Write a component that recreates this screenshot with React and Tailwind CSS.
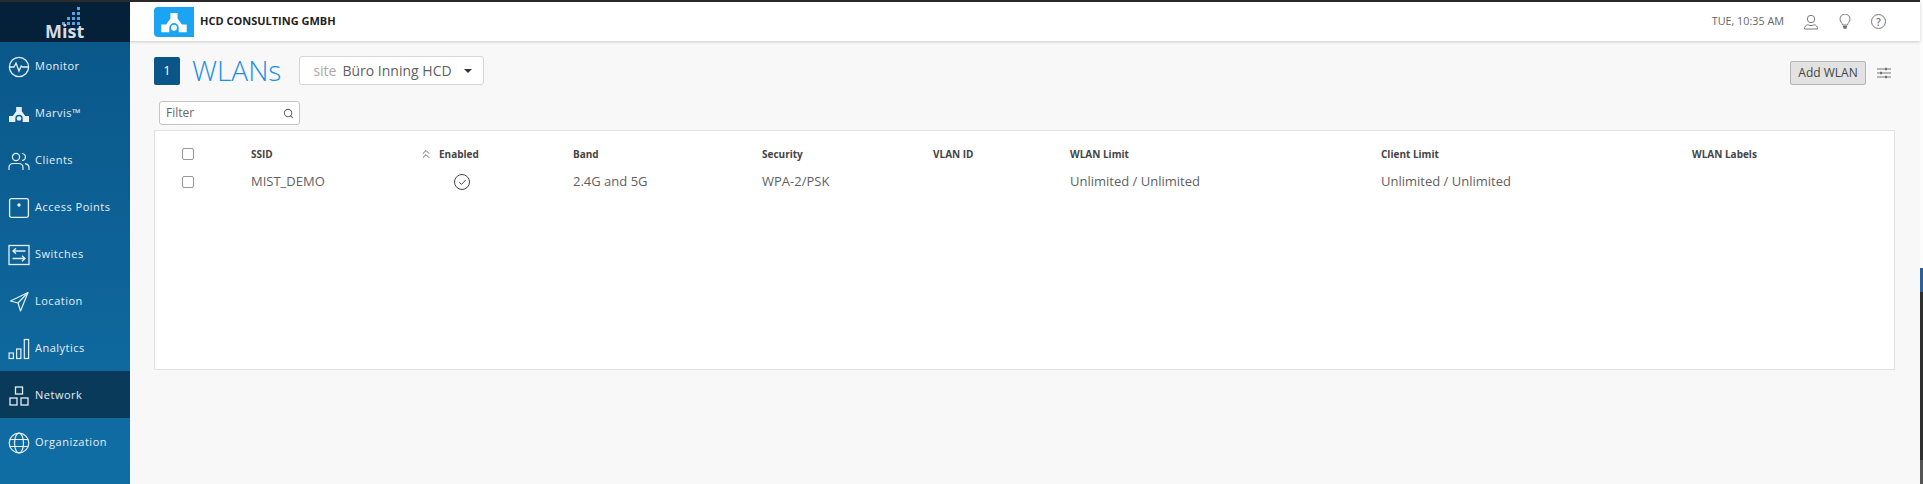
import { ChevronsUp, Search, Check } from "lucide-react";

const IconMonitor = () => (
  <svg width="22" height="22" viewBox="0 0 22 22" fill="none" stroke="currentColor" strokeWidth="1.3">
    <circle cx="11" cy="11" r="9.6" />
    <path d="M1.5 11h4.500l2-4 3 8 2.200-5 1.300 1h6" />
  </svg>
);

const IconMarvis = ({ size = 22, className = "" }) => (
  <svg className={className} width={size} height={size} viewBox="0 0 22 22" fill="currentColor">
    <path d="M8.200 4h5.600v4.200L17.200 13H21v6h-6.300v-3.500a3.700 3.700 0 0 0-7.400 0V19H1v-6h3.800l3.400-4.800z" />
    <circle cx="11" cy="15.500" r="2.300" />
  </svg>
);

const IconClients = () => (
  <svg width="22" height="22" viewBox="0 0 22 22" fill="none" stroke="currentColor" strokeWidth="1.200">
    <circle cx="8" cy="7" r="3.600" />
    <path d="M1 20v-2.500c0-2.600 2-4 4.500-4h5c2.500 0 4.500 1.400 4.500 4V20" />
    <path d="M14 3.500c2.300.3 3.400 1.800 3.400 3.500s-1.100 3.200-3.400 3.500M17 13.600c2.500.4 4 1.800 4 4V20" />
  </svg>
);

const IconAccessPoint = () => (
  <svg width="22" height="22" viewBox="0 0 22 22" fill="none" stroke="currentColor" strokeWidth="1.300">
    <rect x="1.600" y="1.600" width="18.800" height="18.800" rx="1.800" />
    <circle cx="11" cy="8" r="1.700" fill="currentColor" stroke="none" />
  </svg>
);

const IconSwitches = () => (
  <svg width="22" height="22" viewBox="0 0 22 22" fill="none" stroke="currentColor" strokeWidth="1.300">
    <rect x="1" y="1.500" width="20" height="19" />
    <path d="M17.500 7H5M8 4.300 5 7l3 2.700M4.500 14.500H17M14 11.800l3 2.700-3 2.700" />
  </svg>
);

const IconLocation = () => (
  <svg width="22" height="22" viewBox="0 0 22 22" fill="none" stroke="currentColor" strokeWidth="1.200" strokeLinejoin="round">
    <path d="M20 1.500 2.500 10l7.500 2 2.500 8z" />
    <path d="M20 1.500 10 12" />
  </svg>
);

const IconAnalytics = () => (
  <svg width="22" height="22" viewBox="0 0 22 22" fill="none" stroke="currentColor" strokeWidth="1.200">
    <rect x="1.100" y="15" width="4.300" height="5.500" />
    <rect x="8.600" y="11" width="4.300" height="9.500" />
    <rect x="16.300" y="1.500" width="4.300" height="19" />
  </svg>
);

const IconNetwork = () => (
  <svg width="22" height="22" viewBox="0 0 22 22" fill="none" stroke="currentColor" strokeWidth="1.300">
    <rect x="7.500" y="2" width="7" height="7" />
    <rect x="2" y="13" width="7" height="7" />
    <rect x="13" y="13" width="7" height="7" />
  </svg>
);

const IconGlobe = () => (
  <svg width="22" height="22" viewBox="0 0 22 22" fill="none" stroke="currentColor" strokeWidth="1.200">
    <circle cx="11" cy="11" r="9.800" />
    <ellipse cx="11" cy="11" rx="4.500" ry="9.800" />
    <path d="M1.800 7.500h18.400M1.800 14.500h18.400" />
  </svg>
);

const NAV_ITEMS = [
  { label: "Monitor", icon: IconMonitor },
  { label: "Marvis™", icon: IconMarvis },
  { label: "Clients", icon: IconClients },
  { label: "Access Points", icon: IconAccessPoint },
  { label: "Switches", icon: IconSwitches },
  { label: "Location", icon: IconLocation },
  { label: "Analytics", icon: IconAnalytics },
  { label: "Network", icon: IconNetwork, active: true },
  { label: "Organization", icon: IconGlobe },
];

const Checkbox = () => (
  <span className="block h-[12px] w-[12px] rounded-[2px] border border-[#9a9a9a] bg-white" />
);

const MistLogo = () => (
  <div className="relative h-[40px] bg-[#052039]">
    <svg className="absolute left-[62px] top-[4px]" width="20" height="20" viewBox="0 0 20 20" fill="#4ea6e8">
      <rect x="15" y="1" width="3" height="3" />
      <rect x="15" y="6" width="3" height="3" />
      <rect x="10" y="6" width="3" height="3" />
      <rect x="15" y="11" width="3" height="3" />
      <rect x="10" y="11" width="3" height="3" />
      <rect x="5" y="11" width="3" height="3" />
      <rect x="15" y="16" width="3" height="3" />
      <rect x="10" y="16" width="3" height="3" />
      <rect x="5" y="16" width="3" height="3" />
      <rect x="0" y="16" width="3" height="3" />
    </svg>
    <span className="absolute bottom-[0px] left-[45px] text-[18px] leading-[22px] font-bold text-[#d5dde4]">
      Mist
    </span>
  </div>
);

const Sidebar = () => (
  <aside className="flex w-[130px] shrink-0 flex-col bg-gradient-to-b from-[#0a5688] to-[#106ea5]">
    <MistLogo />
    <nav className="flex flex-col">
      {NAV_ITEMS.map(({ label, icon: Icon, active }) => (
        <div
          key={label}
          className={`flex h-[47px] items-center gap-[5px] pl-[8px] pt-[2px] text-[11px] tracking-[0.5px] text-[#e6eff5] ${active ? "bg-[#0a3a5a]" : ""}`}
        >
          <Icon />
          <span>{label}</span>
        </div>
      ))}
    </nav>
  </aside>
);

const Header = () => (
  <header className="flex h-[39px] shrink-0 items-center justify-between bg-white pl-[24px] pr-[34px] shadow-[0_1px_3px_rgba(0,0,0,0.18)]">
    <div className="flex items-center gap-[6px]">
      <span className="flex h-[30px] w-[40px] items-center justify-center rounded-l-[4px] bg-[#1ca4f4] text-white">
        <IconMarvis size={28} />
      </span>
      <span className="text-[11px] font-bold text-[#222]">HCD CONSULTING GMBH</span>
    </div>
    <div className="flex items-center text-[#6d6d6d]">
      <span className="mr-[19px] text-[10.800px] text-[#666]">TUE, 10:35 AM</span>
      <svg className="mr-[19px]" width="16" height="16" viewBox="0 0 16 16" fill="none" stroke="currentColor" strokeWidth="0.900">
        <circle cx="8" cy="5" r="3.700" />
        <path d="M1.500 15c0-2.500 1.200-3.800 3.200-4.200 2 1 4.600 1 6.600 0 2 .4 3.200 1.700 3.200 4.200z" />
      </svg>
      <svg className="mr-[19px]" width="14" height="16" viewBox="0 0 14 16" fill="none" stroke="currentColor" strokeWidth="0.900">
        <path d="M4.500 11c0-2-2.500-3-2.500-6a5 5 0 0 1 10 0c0 3-2.500 4-2.500 6z" />
        <path d="M5 12.500h4M5.500 14h3" strokeWidth="1.300" />
      </svg>
      <span className="flex h-[15px] w-[15px] items-center justify-center rounded-full border border-[#777] text-[10px] font-semibold leading-none">
        ?
      </span>
    </div>
  </header>
);

const COLUMNS = "grid grid-cols-[96px_171px_151px_189px_171px_137px_311px_311px_1fr]";

const WlanTable = () => (
  <div className="ml-[24px] mr-[25px] mt-[5px] h-[240px] border border-[#e2e2e2] bg-white">
    <div className={`${COLUMNS} mt-[13px] h-[20px] items-center text-[10px] font-bold text-[#444]`}>
      <div className="pl-[27px]"><Checkbox /></div>
      <div>SSID</div>
      <div className="flex items-center">
        <ChevronsUp size={14} strokeWidth={1.500} className="ml-[-3px] mr-[6px] text-[#555]" />
        <span>Enabled</span>
      </div>
      <div>Band</div>
      <div>Security</div>
      <div>VLAN ID</div>
      <div>WLAN Limit</div>
      <div>Client Limit</div>
      <div>WLAN Labels</div>
    </div>
    <div className={`${COLUMNS} mt-[6px] h-[24px] items-center text-[13px] text-[#5f5f5f]`}>
      <div className="pl-[27px]"><Checkbox /></div>
      <div>MIST_DEMO</div>
      <div className="pl-[32px]">
        <span className="flex h-[16px] w-[16px] items-center justify-center rounded-full border border-[#444] text-[#333]">
          <Check size={9} strokeWidth={2.500} />
        </span>
      </div>
      <div>2.4G and 5G</div>
      <div>WPA-2/PSK</div>
      <div />
      <div>Unlimited / Unlimited</div>
      <div>Unlimited / Unlimited</div>
      <div />
    </div>
  </div>
);

export default function App() {
  return (
    <div className="relative flex h-[484px] w-[1923px] flex-col overflow-hidden bg-[#fcfcfc] font-['Open_Sans',sans-serif]">
      <div className="h-[2px] w-[1920px] shrink-0 bg-[#2b2b2b]" />
      <div className="flex min-h-0 w-[1920px] flex-1">
        <Sidebar />
        <main className="flex min-w-0 flex-1 flex-col bg-[#f8f8f8]">
          <Header />
          <div className="flex items-start justify-between pl-[24px] pr-[29px] pt-[15px]">
            <div className="flex items-center">
              <span className="flex h-[28px] w-[26px] items-center justify-center rounded-[2px] bg-[#0a5688] text-[13px] text-white">1</span>
              <h1 className="ml-[12px] text-[28px] leading-[29px] font-light text-[#1b8fe0]">WLANs</h1>
              <div className="ml-[18px] flex h-[29px] w-[185px] items-center rounded-[3px] border border-[#d6d6d6] bg-white pl-[13px] text-[14px]">
                <span className="text-[#aaa]">site</span>
                <span className="ml-[6px] text-[#5f5f5f]">Büro Inning HCD</span>
                <span className="ml-[12px] h-0 w-0 border-x-[4px] border-t-[4px] border-x-transparent border-t-[#333]" />
              </div>
            </div>
            <div className="mt-[5px] flex items-center">
              <button className="h-[24px] w-[76px] rounded-[2px] border border-[#b5b5b5] bg-[#e2e2e2] text-[12px] text-[#444]">Add WLAN</button>
              <svg className="ml-[11px]" width="14" height="12" viewBox="0 0 14 12" stroke="#777" strokeWidth="1" fill="none">
                <path d="M0 2h14M0 6h14M0 10h14" />
                <path d="M9 .8v2.400M4 4.800v2.400M9 8.800v2.400" strokeWidth="1.500" stroke="#555" />
              </svg>
            </div>
          </div>
          <div className="ml-[29px] mt-[16px] flex h-[24px] w-[141px] shrink-0 items-center justify-between rounded-[3px] border border-[#c4c4c4] bg-white pl-[6px] pr-[5px] text-[12px] text-[#666]">
            <span>Filter</span>
            <Search size={11} strokeWidth={2.200} className="text-[#666]" />
          </div>
          <WlanTable />
        </main>
      </div>
      {/* strip of the window behind, right edge */}
      <div className="absolute right-0 top-[268px] flex h-[216px] w-[3px] flex-col">
        <div className="h-[24px] bg-[#2f5f95]" />
        <div className="h-[168px] bg-[#2f2f2f]" />
        <div className="flex-1 bg-[#555]" />
      </div>
    </div>
  );
}
